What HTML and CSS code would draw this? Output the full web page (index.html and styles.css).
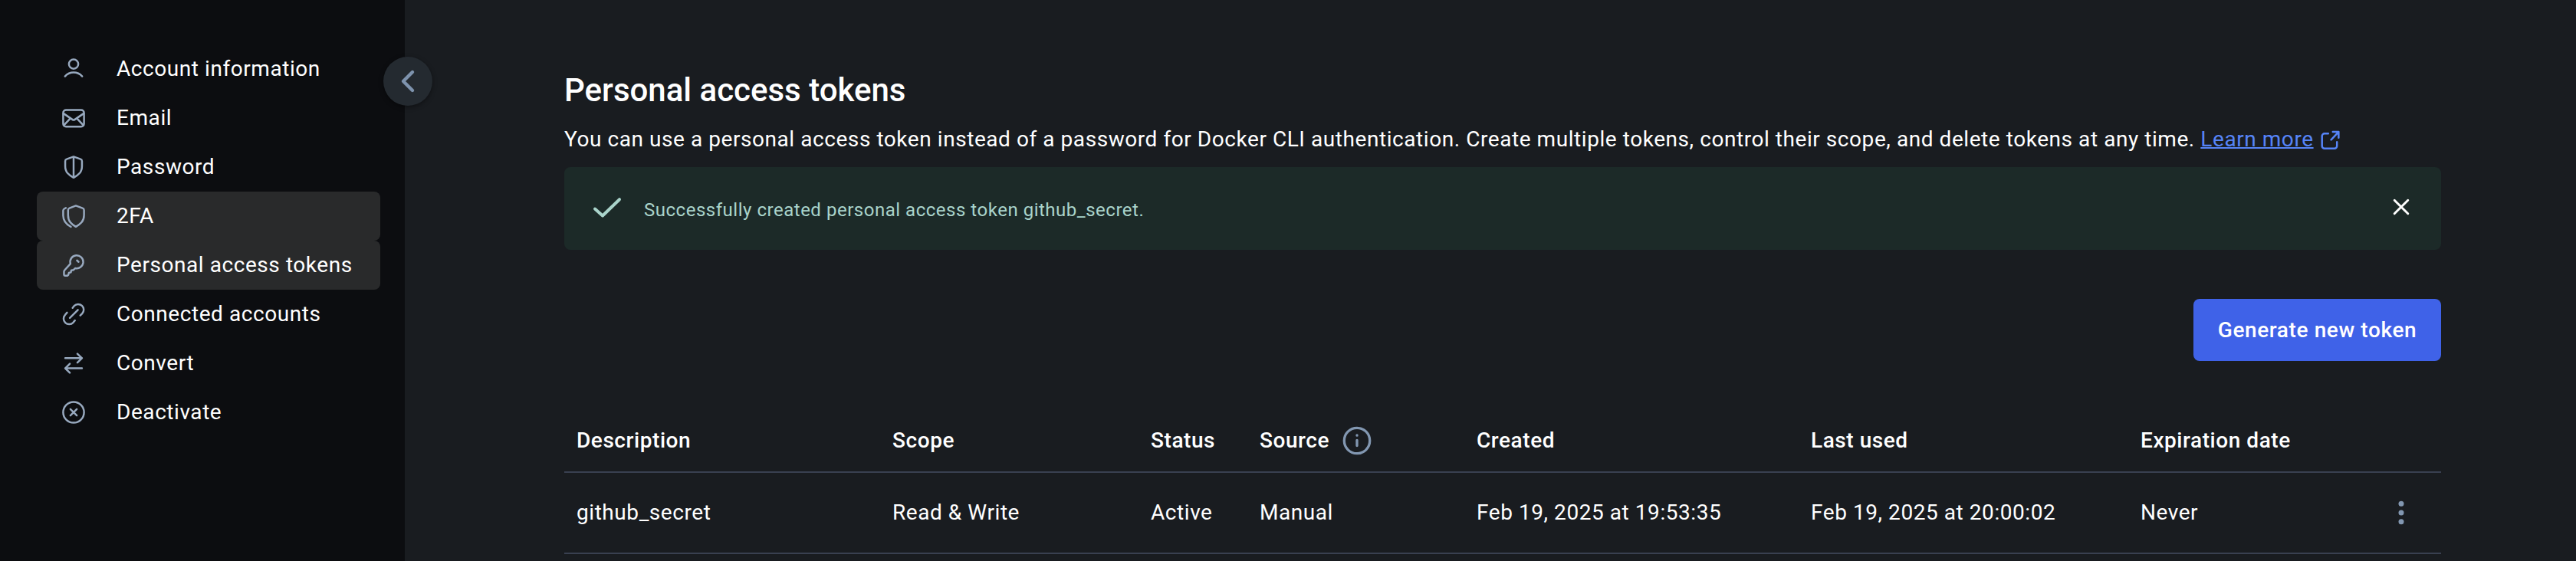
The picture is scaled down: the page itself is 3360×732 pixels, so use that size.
FILE: index.html
```html
<!DOCTYPE html>
<html lang="en">
<head>
<meta charset="utf-8">
<title>Personal access tokens</title>
<link rel="stylesheet" href="styles.css">
</head>
<body>
<div class="app">
  <aside class="sidebar">
    <nav class="nav">
      <a class="nav-item"><svg class="nav-icon" viewBox="0 0 24 24"><circle cx="12" cy="7.2" r="4.6"/><path d="M3.6 19.2c4.6-5 12.2-5 16.8 0"/></svg><span>Account information</span></a>
      <a class="nav-item"><svg class="nav-icon" viewBox="0 0 24 24"><rect x="1.8" y="4.1" width="20.4" height="16.3" rx="2.8"/><path d="M2.2 7.6 11 13.6q1 .7 2 0l8.8-6M2.5 19l6-6.400M21.500 19l-6-6.400"/></svg><span>Email</span></a>
      <a class="nav-item"><svg class="nav-icon" viewBox="0 0 24 24"><path d="M12 1.800 5.200 4.200a2 2 0 0 0-1.400 1.900V11c0 6.200 3.600 8.800 8.200 11.400 4.600-2.600 8.200-5.200 8.200-11.400V6.100a2 2 0 0 0-1.400-1.900zM12 1.800v20.400"/></svg><span>Password</span></a>
      <a class="nav-item nav-item-active"><svg class="nav-icon" viewBox="0 0 24 24"><path d="M14.200 1.800 7.900 4.200A2 2 0 0 0 6.600 6.100V11c0 6.200 3.200 8.800 7.600 11.400 4.400-2.600 8-5.200 8-11.400V6.100a2 2 0 0 0-1.400-1.900zM4.400 4l-1.400.7a2 2 0 0 0-1.200 1.800V11.400c0 5.200 3 8.600 7.600 11.100"/></svg><span>2FA</span></a>
      <a class="nav-item nav-item-active"><svg class="nav-icon" viewBox="0 0 24 24"><path d="M8.900 10.600a6.400 6.400 0 1 1 4.600 4.400l-1.700 1.700-2 .3-.5 2-1.900.5-.6 2.100-.9.700H3.500a.9.900 0 0 1-.9-.9v-3.100a2 2 0 0 1 .6-1.400z"/><path d="M15.300 7.300l1.600 1.500"/></svg><span>Personal access tokens</span></a>
      <a class="nav-item"><svg class="nav-icon" viewBox="0 0 24 24"><path d="M8.300 15.700l7.900-8M11 5.800l1.500-1.900a5.400 5.400 0 0 1 7.900 7.500l-1.900 1.900M5.600 10.400l-1.900 2.200a5.400 5.400 0 0 0 7.900 7.500l1.700-2"/></svg><span>Connected accounts</span></a>
      <a class="nav-item"><svg class="nav-icon" viewBox="0 0 24 24"><path d="M3.800 7h16.400M15.700 2.700 20.200 7l-4.500 4.400M20.200 16.900H3.800M8.300 12.500l-4.500 4.400 4.500 4.400"/></svg><span>Convert</span></a>
      <a class="nav-item"><svg class="nav-icon" viewBox="0 0 24 24"><circle cx="12" cy="12" r="10.200"/><path d="M8.900 8.900l6.200 6.200M15.100 8.900l-6.200 6.200"/></svg><span>Deactivate</span></a>
    </nav>
    <button class="collapse"><svg class="collapse-icon" viewBox="0 0 48 48"><path d="M30 12 18 24l12 12"/></svg></button>
  </aside>
  <main class="main">
    <h1 class="title">Personal access tokens</h1>
    <p class="intro"><span class="intro-text">You can use a personal access token instead of a password for Docker CLI authentication. Create multiple tokens, control their scope, and delete tokens at any time. <a class="link">Learn more</a></span><svg class="link-icon" viewBox="0 0 24 24"><path d="M10 4H5.500A3 3 0 0 0 2.500 7v12a3 3 0 0 0 3 3h12a3 3 0 0 0 3-3v-5M13.500 11.500 22.500 1.900M15.500 1.900h7v7"/></svg></p>
    <div class="alert">
      <svg class="alert-icon" viewBox="0 0 48 48"><path d="M8 24.500 18 33.500 40 12.200"/></svg>
      <span class="alert-text">Successfully created personal access token github_secret.</span>
      <svg class="alert-close" viewBox="0 0 20 20"><path d="M1.200 1.200l17.600 17.600M18.800 1.200 1.200 18.800"/></svg>
    </div>
    <div class="actions"><button class="primary">Generate new token</button></div>
    <div class="table">
      <div class="row row-head">
        <span class="cell">Description</span><span class="cell">Scope</span><span class="cell">Status</span>
        <div class="source"><span class="cell">Source</span><svg class="info" viewBox="0 0 40 40"><circle cx="20" cy="20" r="16.700"/><path d="M20 19.300v7.200M20 12.800v.4"/></svg></div>
        <span class="cell">Created</span><span class="cell">Last used</span><span class="cell">Expiration date</span>
      </div>
      <div class="row row-body">
        <span class="cell">github_secret</span><span class="cell">Read &amp; Write</span><span class="cell">Active</span><span class="cell">Manual</span>
        <span class="cell">Feb 19, 2025 at 19:53:35</span><span class="cell">Feb 19, 2025 at 20:00:02</span><span class="cell">Never</span>
        <svg class="more" viewBox="0 0 8 32"><circle cx="4" cy="4.300" r="3.500"/><circle cx="4" cy="16" r="3.500"/><circle cx="4" cy="27.700" r="3.500"/></svg>
      </div>
    </div>
  </main>
</div>
</body>
</html>
```
FILE: styles.css
```css
* { box-sizing: border-box; }
body {
  margin: 0;
  background: #191c20;
  color: #fff;
  font-family: Roboto, "Liberation Sans", sans-serif;
  font-size: 28px;
  letter-spacing: 0.56px;
}
svg { fill: none; stroke: currentColor; stroke-linecap: round; stroke-linejoin: round; flex: none; }
.app { display: flex; height: 732px; overflow: hidden; }
.sidebar { position: relative; flex: none; width: 528px; padding: 58px 32px 0 48px; background: #0c0d10; }
.nav { display: flex; flex-direction: column; }
.nav-item { display: flex; align-items: center; gap: 40px; height: 64px; padding-left: 32px; border-radius: 8px; white-space: nowrap; }
.nav-item span { padding-bottom: 2px; }
.nav-item-active { background: #292a2b; }
.nav-icon { width: 32px; height: 32px; color: #98a9bf; stroke-width: 1.85; }
.collapse {
  position: absolute; top: 74px; right: -36px; width: 64px; height: 64px; padding: 0;
  display: flex; align-items: center; justify-content: center;
  border: 0; border-radius: 50%; background: #242a30; color: #7e93ad;
  box-shadow: 0 2px 6px rgba(0, 0, 0, 0.4);
}
.collapse-icon { width: 48px; height: 48px; stroke-width: 4.4; }
.main { flex: 1; padding: 86px 176px 0 208px; }
.title { margin: 0; font-size: 42px; line-height: 64px; height: 64px; font-weight: 500; letter-spacing: 0; }
.intro { display: flex; align-items: center; gap: 8px; height: 64px; margin: 0; line-height: 64px; white-space: nowrap; }
.link { color: #5684f7; text-decoration: underline; text-decoration-thickness: 1.5px; }
.link-icon { width: 26px; height: 26px; margin-top: 2px; color: #5684f7; stroke-width: 2.3; }
.alert { display: flex; align-items: center; height: 108px; margin-top: 4px; padding: 0 42px 0 32px; border-radius: 8px; background: #1c2a28; color: #aad4cb; }
.alert-icon { width: 48px; height: 48px; stroke-width: 4; }
.alert-text { flex: 1; margin-left: 24px; padding-top: 3px; font-size: 24px; letter-spacing: 0.52px; }
.alert-close { width: 20px; height: 20px; margin-bottom: 4px; color: #fff; stroke-width: 2.900; overflow: visible; }
.actions { display: flex; justify-content: flex-end; margin-top: 64px; }
.primary { width: 323px; height: 81px; border: 0; padding: 0; border-radius: 8px; background: #3f62e8; color: #fff; font: 500 28px Roboto, sans-serif; letter-spacing: 0.6px; }
.table { margin-top: 64px; }
.row { display: grid; grid-template-columns: 412px 337px 142px 283px 436px 430px 320px 1fr; align-items: center; padding-left: 16px; border-bottom: 2px solid #394050; white-space: nowrap; }
.row-head { height: 82px; font-weight: 500; }
.row-body { height: 106px; }
.cell { padding-bottom: 2px; }
.source { display: flex; align-items: center; gap: 16px; }
.info { width: 40px; height: 40px; color: #8297b1; stroke-width: 3.3; }
.more { width: 8px; height: 32px; color: #8297b1; fill: currentColor; stroke: none; margin-left: 16px; }
```
